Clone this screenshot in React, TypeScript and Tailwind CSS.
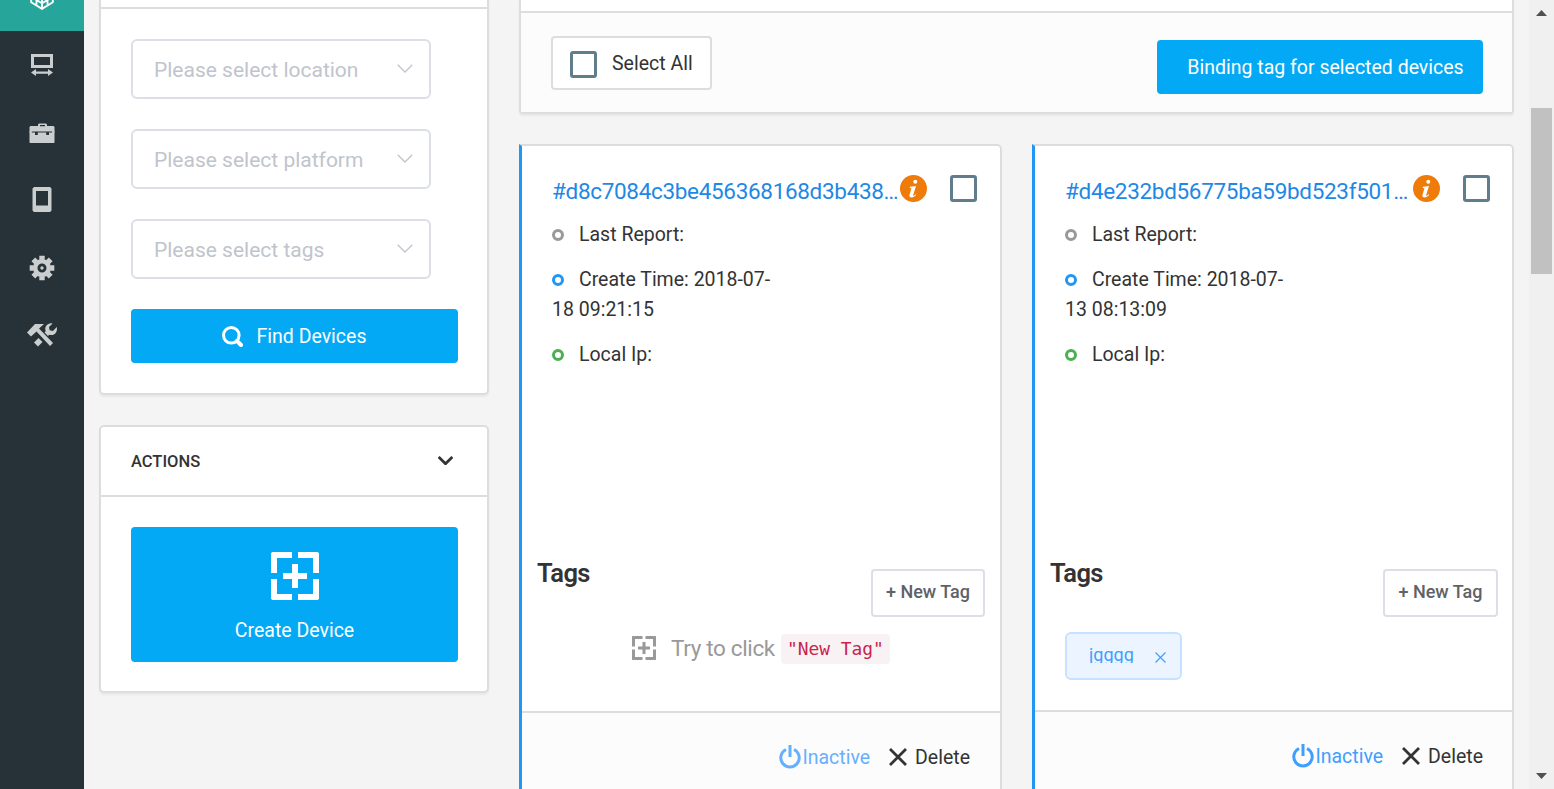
import React from "react";

const ScanPlus = ({ className }: { className: string }) => (
  <svg viewBox="0 0 16 16" fill="currentColor" className={className}>
    <path d="M.4 0H7v2H2v5H0V.4zM9 0h6.6l.4.4V7h-2V2H9zM0 9h2v5h5v2H.4l-.4-.4zM14 9h2v6.6l-.4.4H9v-2h5zM7 4h2v3h3v2H9v3H7V9H4V7h3z" />
  </svg>
);

const Chevron = ({ className, stroke }: { className: string; stroke: number }) => (
  <svg viewBox="0 0 16 9" fill="none" stroke="currentColor" strokeWidth={stroke} className={className}>
    <path d="M.7.7 8 8 15.3.7" />
  </svg>
);

const Checkbox = () => <span className="block size-[27px] shrink-0 rounded-[3px] border-3 border-[#607d8b] bg-white" />;

function Sidebar() {
  return (
    <nav className="flex h-full w-[84px] shrink-0 flex-col items-center bg-[#263238] text-[#cbcecf]">
      <div className="flex h-[31px] w-full shrink-0 justify-center bg-[#26a69a] text-white">
        <svg width="24" height="11" viewBox="0 0 24 11" fill="none" stroke="currentColor" strokeWidth="1.900">
          <path d="M1.200-3v5.300L12 8.800l10.800-6.500V-3M12 0v8M1.200-3 12 3.200 22.800-3M6.500-4v8.500M17.500-4v8.500" />
        </svg>
      </div>
      <div className="flex h-[68px] w-full shrink-0 items-center justify-center">
        <svg width="24" height="24" viewBox="0 0 24 24" fill="currentColor">
          <path fillRule="evenodd" d="M1 1h22v14H1zM4 4v8h16V4z" />
          <path d="M1 19.500 6 16v2.500h12V16l5 3.500L18 23v-2.300H6V23z" />
        </svg>
      </div>
      <div className="flex h-[68px] w-full shrink-0 items-center justify-center">
        <svg width="26" height="22" viewBox="0 0 26 22" fill="currentColor">
          <path fillRule="evenodd" d="M9 4V2.500L10 1.500h7l1 1V4h6.500l1 1v4.500H.5V5l1-1zM11 3v1.200h5V3z" />
          <path d="M.5 10.500H6V13h2.800v-2.500h8.400V13H20v-2.500h5.500v10l-.6.600H1.100l-.6-.6z" />
          <path d="M.5 9h2.300v2H.5zM23.200 9h2.300v2h-2.300z" />
        </svg>
      </div>
      <div className="flex h-[66px] w-full shrink-0 items-center justify-center">
        <svg width="20" height="26" viewBox="0 0 20 26" fill="currentColor">
          <path fillRule="evenodd" d="M2 0h16l1.500 1.500v22L18 25H2L.5 23.500v-22zM4 4v14.500h12V4z" />
        </svg>
      </div>
      <div className="flex h-[68px] w-full shrink-0 items-center justify-center pt-px">
        <svg width="26" height="26" viewBox="0 0 26 26" fill="currentColor">
          <path d="M10.300.7h5.400v4h-5.400zM10.300 21.300h5.400v4h-5.400zM.7 10.300h4v5.400h-4zM21.300 10.300h4v5.400h-4z" />
          <path d="M2.400 6.200 6.200 2.400l3 3-3.800 3.800zM16.800 5.400l3-3 3.800 3.800-3 3zM2.400 19.800l3-3 3.800 3.800-3 3zM20.600 16.800l3 3-3.800 3.800-3-3z" />
          <circle cx="13" cy="13" r="6.800" fill="none" stroke="currentColor" strokeWidth="4.600" />
          <circle cx="13" cy="13" r="1.700" />
        </svg>
      </div>
      <div className="flex h-[68px] w-full shrink-0 items-center justify-center">
        <svg width="32" height="26" viewBox="0 0 32 26" fill="currentColor">
          <path d="M9 2h9l-5 4.500 14 14.500-3 3L10.500 9.500 5 14.500 1 10.500z" />
          <path d="M26.500 1.500 23 5l.6 3.300 3.300.6L30.800 5c1.200 5-2.800 9.500-7.600 7.700l-1.200 1.200-3.500-3.500 1.200-1.200C18 4.500 22 .5 26.500 1.500zM12.500 16l4 4-4.500 4.500-4-4z" />
        </svg>
      </div>
    </nav>
  );
}

function SelectBox({ label }: { label: string }) {
  return (
    <div className="flex h-[60px] w-[300px] items-center justify-between rounded-[6px] border-2 border-[#dcdfe6] bg-white pr-4 pl-[21px] text-[21px] text-[#c0c4cc]">
      <span className="pt-[3px]">{label}</span>
      <Chevron className="mb-0.5 h-[9px] w-4" stroke={1.300} />
    </div>
  );
}

function Filters() {
  return (
    <div className="flex w-[390px] shrink-0 flex-col gap-[30px]">
      <section className="flex h-[395px] flex-col rounded-b-[5px] border-2 border-t-0 border-[#ddd] bg-white shadow-[0_2px_2px_rgba(0,0,0,0.05)]">
        <div className="h-[9px] shrink-0 border-b-2 border-[#ddd]" />
        <div className="flex flex-col gap-[30px] px-[30px] pt-[30px]">
          <SelectBox label="Please select location" />
          <SelectBox label="Please select platform" />
          <SelectBox label="Please select tags" />
          <button className="flex h-[54px] w-[327px] items-center justify-center gap-[14px] rounded-[4px] bg-[#03a9f4] pr-px text-[19.500px] text-white">
            <svg width="21" height="21" viewBox="0 0 21 21" fill="none" stroke="currentColor" strokeWidth="3">
              <circle cx="9.300" cy="9.300" r="7.800" />
              <path d="m15 15 4 4" strokeWidth="4" strokeLinecap="round" />
            </svg>
            <span className="pt-0.5">Find Devices</span>
          </button>
        </div>
      </section>
      <section className="flex h-[268px] flex-col rounded-[5px] border-2 border-[#ddd] bg-white shadow-[0_2px_2px_rgba(0,0,0,0.05)]">
        <div className="flex h-[70px] shrink-0 items-center justify-between border-b-2 border-[#ddd] pr-[34px] pl-[30px] text-[16.500px] font-medium text-[#333]">
          <h2 className="pt-[3px]">ACTIONS</h2>
          <Chevron className="mb-0.5 h-[9px] w-[15px]" stroke={2.900} />
        </div>
        <div className="px-[30px] pt-[30px]">
          <button className="flex h-[135px] w-[327px] flex-col items-center rounded-[4px] bg-[#03a9f4] pt-[25px] text-[19.500px] text-white">
            <ScanPlus className="size-[48px]" />
            <span className="mt-4 leading-[30px]">Create Device</span>
          </button>
        </div>
      </section>
    </div>
  );
}

const dots = {
  gray: "border-[#999]",
  blue: "border-[#2196f3]",
  green: "border-[#4caf50]",
};

function InfoRow({ dot, children }: { dot: keyof typeof dots; children: React.ReactNode }) {
  return (
    <li className="mb-[15px] leading-[30px]">
      <span className={`mr-[15px] inline-block size-3 rounded-full border-[3.500px] align-[0px] ${dots[dot]}`} />
      {children}
    </li>
  );
}

type Device = { id: string; created: [string, string]; tag?: string };

function DeviceCard({ id, created, tag }: Device) {
  return (
    <article
      className={`flex flex-col rounded-tr-[5px] border-2 border-l-3 border-[#ddd] border-l-[#2196f3] bg-white text-[19.500px] text-[#333] ${tag ? "w-[482px]" : "w-[483px]"}`}
    >
      <div className={`flex shrink-0 flex-col ${tag ? "h-[564px]" : "h-[565px]"}`}>
        <div className={`flex h-[73px] shrink-0 items-start pt-[29px] pl-[30px] ${tag ? "pr-[22px]" : "pr-[23px]"}`}>
          <a className="w-[348px] text-[22.500px] leading-8 tracking-[-0.32px] whitespace-nowrap text-[#1e88e5]">{id}</a>
          <svg width="27" height="27" viewBox="0 0 27 27" className="shrink-0">
            <circle cx="13.500" cy="13.500" r="13.500" fill="#ef7b0a" />
            <circle cx="15.300" cy="6.800" r="2" fill="#fff" />
            <path d="m10 11.800 6-.9-2.900 9.300c-.3 1 .5.900 2.400-1l.7.600c-3 3.700-7.700 3.300-6.700-.1l1.900-6.300-1.700-.6z" fill="#fff" />
          </svg>
          <span className="ml-auto">
            <Checkbox />
          </span>
        </div>
        <ul className="h-[333px] w-[260px] shrink-0 pt-px pl-[30px]">
          <InfoRow dot="gray">Last Report:</InfoRow>
          <InfoRow dot="blue">
            Create Time: {created[0]}
            <br />
            {created[1]}
          </InfoRow>
          <InfoRow dot="green">Local Ip:</InfoRow>
        </ul>
        <div className={`flex h-[65px] shrink-0 items-start justify-between pl-[15px] ${tag ? "pr-[14px]" : "pr-[15px]"}`}>
          <h3 className="mt-[3px] text-[25.500px] leading-9 font-semibold tracking-[-0.6px]">Tags</h3>
          <button
            className={`mt-[17px] h-[48px] rounded-[4px] border-2 border-[#dcdfe6] pb-1 text-[18px] font-medium text-[#606266] ${tag ? "w-[115px]" : "w-[114px]"}`}
          >
            + New Tag
          </button>
        </div>
        {tag ? (
          <div className="mt-[15px] ml-[30px] flex h-[48px] w-[117px] items-start rounded-[6px] border-2 border-[#c6e2ff] bg-[#ecf5ff] pl-[22px] text-[#409eff]">
            <span className="mt-2 block h-[21px] overflow-hidden text-[18px] leading-[26px]">{tag}</span>
            <svg width="11" height="11" viewBox="0 0 11 11" stroke="currentColor" strokeWidth="1.200" className="mt-[18px] ml-[21px]">
              <path d="m.5.5 10 10m0-10-10 10" />
            </svg>
          </div>
        ) : (
          <div className="mt-[17px] flex h-[30px] items-center pl-[110px] text-[22.500px] text-[#999]">
            <ScanPlus className="mr-[15px] mb-[3px] size-[24px]" />
            <span className="tracking-[-0.350px]">Try to click</span>
            <code className="ml-1.5 flex h-[30px] w-[109px] items-center justify-center rounded-[4px] bg-[#f9f2f4] pt-px font-['DejaVu_Sans_Mono','Liberation_Mono',monospace] text-[17.900px] text-[#c7254e]">
              "New Tag"
            </code>
          </div>
        )}
      </div>
      <footer className={`flex grow items-start justify-end border-t-2 border-[#ddd] bg-[#fcfcfc] pt-[29px] ${tag ? "pr-[29px]" : "pr-[30px]"}`}>
        <span className={`flex h-[30px] items-center text-[#409eff] ${tag ? "" : "opacity-80"}`}>
          <svg width="22" height="26" viewBox="0 0 22 26" fill="none" stroke="currentColor" strokeWidth="3" className="mr-px">
            <path d="M7 5.500a9.200 9.200 0 1 0 8 0M11 1v12" />
          </svg>
          <span className="pt-0.5">Inactive</span>
        </span>
        <span className="ml-[19px] flex h-[30px] items-center">
          <svg width="18" height="18" viewBox="0 0 18 18" stroke="currentColor" strokeWidth="2.800" className="mr-2">
            <path d="m1 1 16 16m0-16L1 17" />
          </svg>
          <span className="pt-0.5">Delete</span>
        </span>
      </footer>
    </article>
  );
}

export default function App() {
  return (
    <div className="flex h-[789px] w-[1554px] overflow-hidden bg-[#f4f4f4] font-['Roboto',sans-serif] text-[#333]">
      <Sidebar />
      <main className="flex h-full w-[1445px] shrink-0 gap-[30px] pr-[15px] pl-[15px]">
        <Filters />
        <div className="flex w-[995px] flex-col gap-[30px]">
          <section className="flex h-[114px] shrink-0 flex-col rounded-b-[4px] border-x-2 border-b-2 border-[#ddd] bg-white shadow-[0_2px_2px_rgba(0,0,0,0.05)]">
            <div className="h-[13px] shrink-0 border-b-2 border-[#ddd]" />
            <div className="flex grow items-start justify-between bg-[#fcfcfc] pr-[29px] pl-[30px]">
              <label className="mt-[23px] flex h-[54px] w-[161px] items-center rounded-[4px] border-2 border-[#ddd] bg-white pl-[17px] text-[19.500px]">
                <span className="mt-0.5">
                  <Checkbox />
                </span>
                <span className="ml-[15px] pt-px">Select All</span>
              </label>
              <button className="mt-[27px] h-[54px] w-[326px] rounded-[4px] bg-[#03a9f4] pt-0.5 pl-[11px] text-[19.500px] text-white">
                Binding tag for selected devices
              </button>
            </div>
          </section>
          <div className="flex h-[680px] shrink-0 justify-between">
            <DeviceCard id="#d8c7084c3be456368168d3b438…" created={["2018-07-", "18 09:21:15"]} />
            <DeviceCard id="#d4e232bd56775ba59bd523f501…" created={["2018-07-", "13 08:13:09"]} tag="jgggg" />
          </div>
        </div>
      </main>
      <aside className="flex h-full w-[25px] shrink-0 flex-col items-center bg-[#f0f0f0]">
        <svg width="11" height="6" viewBox="0 0 11 6" fill="#505050" className="mt-2.5 mb-[92px]">
          <path d="M0 6 5.500 0 11 6z" />
        </svg>
        <div className="h-[166px] w-[21px] bg-[#c1c1c1]" />
        <svg width="11" height="6" viewBox="0 0 11 6" fill="#505050" className="mt-auto mb-2.5">
          <path d="M0 0h11L5.500 6z" />
        </svg>
      </aside>
    </div>
  );
}
